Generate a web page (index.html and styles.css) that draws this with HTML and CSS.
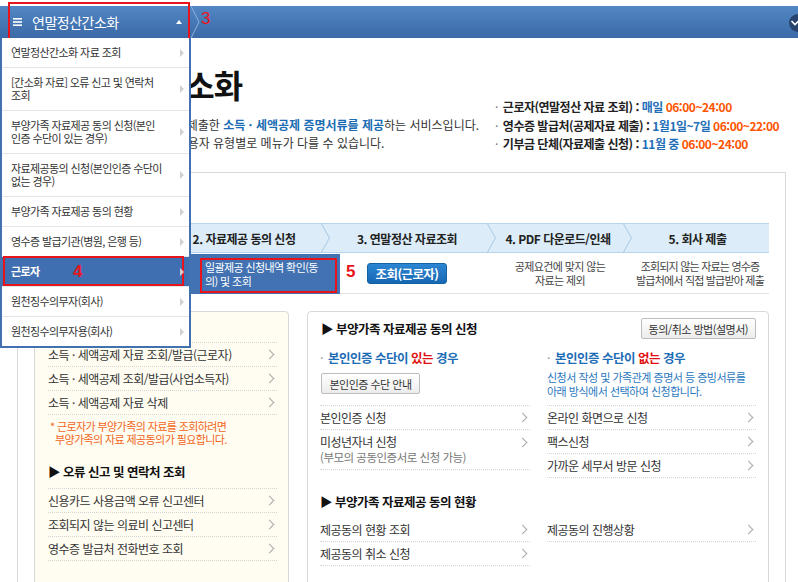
FILE: index.html
```html
<!DOCTYPE html>
<html lang="ko">
<head>
    <meta charset="UTF-8">
    <meta name="viewport" content="width=device-width, initial-scale=1.0">
    <title>연말정산간소화</title>
    <link rel="stylesheet" href="styles.css">
</head>
<body>

<div class="topbar">
    <div class="gnb-cur">
        <svg class="ham" width="9" height="8" viewBox="0 0 9 8"><rect y="0" width="9" height="1.6" fill="#fff"/><rect y="3.2" width="9" height="1.6" fill="#fff"/><rect y="6.4" width="9" height="1.6" fill="#fff"/></svg>
        <span class="gnb-name">연말정산간소화</span>
        <span class="gnb-up"></span>
    </div>
    <svg class="crumb" width="10" height="32" viewBox="0 0 10 32"><polyline points="1,0 9,16 1,32" fill="none" stroke="#8db0dc" stroke-width="1"/></svg>
    <span class="mark">3</span>
    <span class="top-more"><svg width="10" height="8" viewBox="0 0 10 8"><polyline points="1.5,2 5,5.5 8.5,2" fill="none" stroke="#fff" stroke-width="1.6"/></svg></span>
</div>

<ul class="gnb-menu">
    <li>연말정산간소화 자료 조회</li>
    <li>[간소화 자료] 오류 신고 및 연락처<br>조회</li>
    <li>부양가족 자료제공 동의 신청(본인<br>인증 수단이 있는 경우)</li>
    <li>자료제공동의 신청(본인인증 수단이<br>없는 경우)</li>
    <li>부양가족 자료제공 동의 현황</li>
    <li>영수증 발급기관(병원, 은행 등)</li>
    <li class="on">근로자 <span class="mark">4</span></li>
    <li>원천징수의무자(회사)</li>
    <li>원천징수의무자용(회사)</li>
</ul>

<div class="gnb-sub">
    일괄제공 신청내역 확인(동<br>의) 및 조회
    <span class="mark">5</span>
</div>

<div class="page">
    <div class="intro">
        <div class="intro-main">
            <h1>연말정산간소화</h1>
            <p class="lead">연말정산간소화는 근로자가 회사에 제출한 <b>소득 · 세액공제 증명서류를 제공</b>하는 서비스입니다.<br>※ 연말정산간소화 홈페이지에는 이용자 유형별로 메뉴가 다를 수 있습니다.</p>
        </div>
        <ul class="hours">
            <li><i>·</i>근로자(연말정산 자료 조회) : <span class="blue">매일</span> <span class="orange">06:00~24:00</span></li>
            <li><i>·</i>영수증 발급처(공제자료 제출) : <span class="blue">1월1일~7일</span> <span class="orange">06:00~22:00</span></li>
            <li><i>·</i>기부금 단체(자료제출 신청) : <span class="blue">11월 중</span> <span class="orange">06:00~24:00</span></li>
        </ul>
    </div>

    <div class="panel">
        <h3 class="panel-title">이용 절차 안내</h3>
        <ol class="steps">
            <li>1. 로그인<svg class="step-arr" width="9" height="30" viewBox="0 0 9 30"><polyline points="0,0 8.5,15 0,30" fill="none" stroke="#a9c8e3"/></svg></li>
            <li>2. 자료제공 동의 신청<svg class="step-arr" width="9" height="30" viewBox="0 0 9 30"><polyline points="0,0 8.5,15 0,30" fill="none" stroke="#a9c8e3"/></svg></li>
            <li>3. 연말정산 자료조회<svg class="step-arr" width="9" height="30" viewBox="0 0 9 30"><polyline points="0,0 8.5,15 0,30" fill="none" stroke="#a9c8e3"/></svg></li>
            <li>4. PDF 다운로드/인쇄<svg class="step-arr" width="9" height="30" viewBox="0 0 9 30"><polyline points="0,0 8.5,15 0,30" fill="none" stroke="#a9c8e3"/></svg></li>
            <li>5. 회사 제출</li>
        </ol>
        <div class="step-desc">
            <div></div>
            <div></div>
            <div><button class="btn-blue">조회(근로자)</button></div>
            <div>공제요건에 맞지 않는<br>자료는 제외</div>
            <div>조회되지 않는 자료는 영수증<br>발급처에서 직접 발급받아 제출</div>
        </div>

        <div class="boxes">
            <div class="box box-note">
                <h4 class="box-title line">▶ 소득 · 세액공제</h4>
                <ul class="links">
                    <li>소득 · 세액공제 자료 조회/발급(근로자)</li>
                    <li>소득 · 세액공제 조회/발급(사업소득자)</li>
                    <li>소득 · 세액공제 자료 삭제</li>
                </ul>
                <p class="note">* 근로자가 부양가족의 자료를 조회하려면<br>&nbsp;&nbsp;부양가족의 자료 제공동의가 필요합니다.</p>
                <h4 class="box-title line second">▶ 오류 신고 및 연락처 조회</h4>
                <ul class="links">
                    <li>신용카드 사용금액 오류 신고센터</li>
                    <li>조회되지 않는 의료비 신고센터</li>
                    <li>영수증 발급처 전화번호 조회</li>
                </ul>
            </div>

            <div class="box box-main">
                <div class="box-head">
                    <h4 class="box-title">▶ 부양가족 자료제공 동의 신청</h4>
                    <button class="btn-gray">동의/취소 방법(설명서)</button>
                </div>
                <div class="cols">
                    <div class="col">
                        <div class="col-top">
                            <h5 class="case"><i>·</i>본인인증 수단이 <span class="red">있는</span> 경우</h5>
                            <button class="btn-gray btn-auth">본인인증 수단 안내</button>
                        </div>
                        <ul class="links">
                            <li>본인인증 신청</li>
                            <li class="two">미성년자녀 신청<span class="sub">(부모의 공동인증서로 신청 가능)</span></li>
                        </ul>
                    </div>
                    <div class="col">
                        <div class="col-top">
                            <h5 class="case"><i>·</i>본인인증 수단이 <span class="red">없는</span> 경우</h5>
                            <p class="case-desc">신청서 작성 및 가족관계 증명서 등 증빙서류를<br>아래 방식에서 선택하여 신청합니다.</p>
                        </div>
                        <ul class="links">
                            <li>온라인 화면으로 신청</li>
                            <li>팩스신청</li>
                            <li>가까운 세무서 방문 신청</li>
                        </ul>
                    </div>
                </div>
                <h4 class="box-title status">▶ 부양가족 자료제공 동의 현황</h4>
                <div class="cols">
                    <ul class="links">
                        <li>제공동의 현황 조회</li>
                        <li>제공동의 취소 신청</li>
                    </ul>
                    <ul class="links">
                        <li>제공동의 진행상황</li>
                    </ul>
                </div>
            </div>
        </div>
    </div>
</div>

</body>
</html>
```

FILE: styles.css
```css
* { box-sizing: border-box; }
body { margin: 0; height: 582px; overflow: hidden; position: relative; background: #fff; color: #333; font-family: "Noto Sans CJK KR", "Noto Sans", sans-serif; font-size: 12px; letter-spacing: -0.5px; }
ul, ol { list-style: none; margin: 0; padding: 0; }
h1, h3, h4, h5, p { margin: 0; }
i { font-style: normal; }
button { font-family: inherit; letter-spacing: inherit; cursor: pointer; }

.mark { color: #e8141c; font: bold 17px/18px "Liberation Sans", Arial, sans-serif; letter-spacing: 0; }

/* top bar */
.topbar { position: relative; margin-top: 6px; height: 32px; display: flex; background: linear-gradient(#5286c4, #3a6aa7); }
.gnb-cur { position: relative; width: 190px; display: flex; align-items: center; padding-left: 13px; color: #fff; font-size: 14px; }
.gnb-cur::after { content: ""; position: absolute; left: 8px; right: 0; top: -4px; bottom: -4px; border: 2px solid #e8141c; }
.ham { margin-right: 10px; }
.gnb-name { flex: 1; }
.gnb-up { width: 0; height: 0; margin-right: 8px; border-left: 3px solid transparent; border-right: 3px solid transparent; border-bottom: 4px solid #fff; }
.crumb { display: block; }
.topbar .mark { margin: 4px 0 0 1px; font-weight: normal; }
.top-more { position: absolute; right: -9px; top: 8px; width: 18px; height: 18px; border-radius: 50%; background: #26446e; display: flex; align-items: center; justify-content: center; padding-right: 7px; }
.top-more svg { display: block; }

/* dropdown */
.gnb-menu { position: absolute; top: 38px; left: 0; width: 191px; z-index: 5; background: #fff; border: 2px solid #4271b0; border-top: 0; font-size: 11px; letter-spacing: -0.6px; }
.gnb-menu li { position: relative; padding: 8px 20px 8px 9px; line-height: 13px; white-space: nowrap; border-bottom: 1px solid #e6e6e6; }
.gnb-menu li:last-child { border-bottom: 0; }
.gnb-menu li::after { content: ""; position: absolute; right: 5px; top: 50%; margin-top: -4px; border-left: 4px solid #d0d0d0; border-top: 4px solid transparent; border-bottom: 4px solid transparent; }
.gnb-menu li.on { background: #3f6fb0; color: #fff; font-weight: bold; }
.gnb-menu li.on::before { content: ""; position: absolute; left: 1px; right: 5px; top: -1px; bottom: 0; border: 2px solid #e8141c; }
.gnb-menu .on .mark { position: absolute; left: 71px; top: 6px; }
.gnb-sub { position: absolute; top: 254px; left: 190px; width: 150px; height: 40px; z-index: 5; padding: 6px 0 0 15px; background: #4272b1; color: #fff; font-size: 11px; line-height: 14px; letter-spacing: -0.6px; }
.gnb-sub::before { content: ""; position: absolute; left: 10px; right: 3px; top: 4px; bottom: 1px; border: 2px solid #e8141c; }
.gnb-sub .mark { position: absolute; left: 156px; top: 9px; }

/* intro */
.page { padding: 28px 12px 0 17px; }
.intro { display: flex; height: 106px; }
.intro-main { width: 478px; }
h1 { margin-left: 26px; font-size: 32px; line-height: 36px; color: #111; letter-spacing: -1px; }
.lead { margin: 14px 0 0 -6px; line-height: 18px; letter-spacing: 0; white-space: nowrap; }
.lead b { color: #1b6cb3; }
.hours { margin-top: 32px; line-height: 18.5px; font-weight: bold; color: #222; white-space: nowrap; }
.hours i { color: #777; margin-right: 5px; font-weight: normal; }
.blue { color: #1f6fb8; }
.orange { color: #ff5500; }
.red { color: #e01010; }

/* panel */
.panel { border: 1px solid #d9d9d9; padding: 0 16px; height: 420px; }
.panel-title { padding-top: 16px; margin-bottom: 14px; line-height: 20px; font-size: 14px; }
.steps { display: grid; grid-template-columns: 136px 160px 166px 136px 136px; height: 30px; background: #dcedf9; border-top: 1px solid #b8d4eb; border-bottom: 1px solid #b8d4eb; }
.steps li { position: relative; display: flex; align-items: center; justify-content: center; padding-right: 12px; font-weight: bold; color: #222; }
.steps li:last-child { padding-right: 5px; }
.step-arr { position: absolute; right: 0; top: -1px; }
.step-desc { display: grid; grid-template-columns: 136px 160px 166px 136px 136px; height: 41px; border-bottom: 1px solid #e3e3e3; }
.step-desc div { display: flex; align-items: center; justify-content: center; text-align: center; padding-right: 8px; font-size: 11px; line-height: 14px; color: #444; letter-spacing: -0.6px; white-space: nowrap; }
.step-desc div:last-child { padding-right: 0; letter-spacing: -0.8px; }
.btn-blue { height: 21px; width: 80px; margin-right: 4px; padding: 0; border: 1px solid #15609f; border-radius: 3px; background: linear-gradient(#2c86d3, #1667b3); color: #fff; font-size: 12.5px; font-weight: bold; }

/* boxes */
.boxes { display: grid; grid-template-columns: 255px 462px; gap: 18px; margin-top: 17px; }
.box { border: 1px solid #d8d8d8; border-radius: 4px; min-height: 320px; }
.box-note { background: #fffdf1; padding: 8px 11px 0 13px; }
.box-main { padding: 6px 12px 0 12px; }
.box-title { font-size: 12.5px; line-height: 18px; color: #111; }
.box-title.line { padding-bottom: 4px; border-bottom: 1px dotted #d4d4d4; }
.box-title.second { margin-top: 17px; padding-bottom: 7px; }
.links li { position: relative; height: 24px; line-height: 23px; padding-right: 14px; border-bottom: 1px dotted #d4d4d4; white-space: nowrap; }
.links li::after { content: ""; position: absolute; right: 4px; top: 8px; width: 6px; height: 6px; border-top: 1px solid #a8a8a8; border-right: 1px solid #a8a8a8; transform: rotate(45deg); }
.links li.two { height: auto; padding-top: 4px; padding-bottom: 4px; line-height: 16px; }
.links li.two::after { top: 9px; }
.sub { display: block; line-height: 15px; color: #777; font-size: 11.5px; }
.note { margin-top: 5px; padding-left: 2px; color: #f26522; font-size: 11px; line-height: 13px; letter-spacing: -0.6px; }

.box-head { display: flex; align-items: center; justify-content: space-between; height: 21px; padding-left: 1px; }
.btn-gray { height: 21px; padding: 0 7px; border: 1px solid #bdbdbd; border-radius: 2px; background: linear-gradient(#fff, #ececec); color: #333; font-size: 11px; }
.cols { display: grid; grid-template-columns: 210px 209px; gap: 17px; }
.box-head + .cols { margin-top: 10px; }
.col-top { height: 57px; border-bottom: 1px dotted #d4d4d4; }
.case { font-size: 12.5px; line-height: 18px; color: #1d6db6; }
.case i { color: #999; margin-right: 5px; font-weight: normal; }
.btn-auth { margin-top: 6px; margin-left: 1px; width: 99px; padding: 0; }
.case-desc { margin-top: 3px; font-size: 11px; line-height: 14px; color: #2a78c0; letter-spacing: -0.5px; }
.box-title.status { margin: 15px 0 7px; }
```
